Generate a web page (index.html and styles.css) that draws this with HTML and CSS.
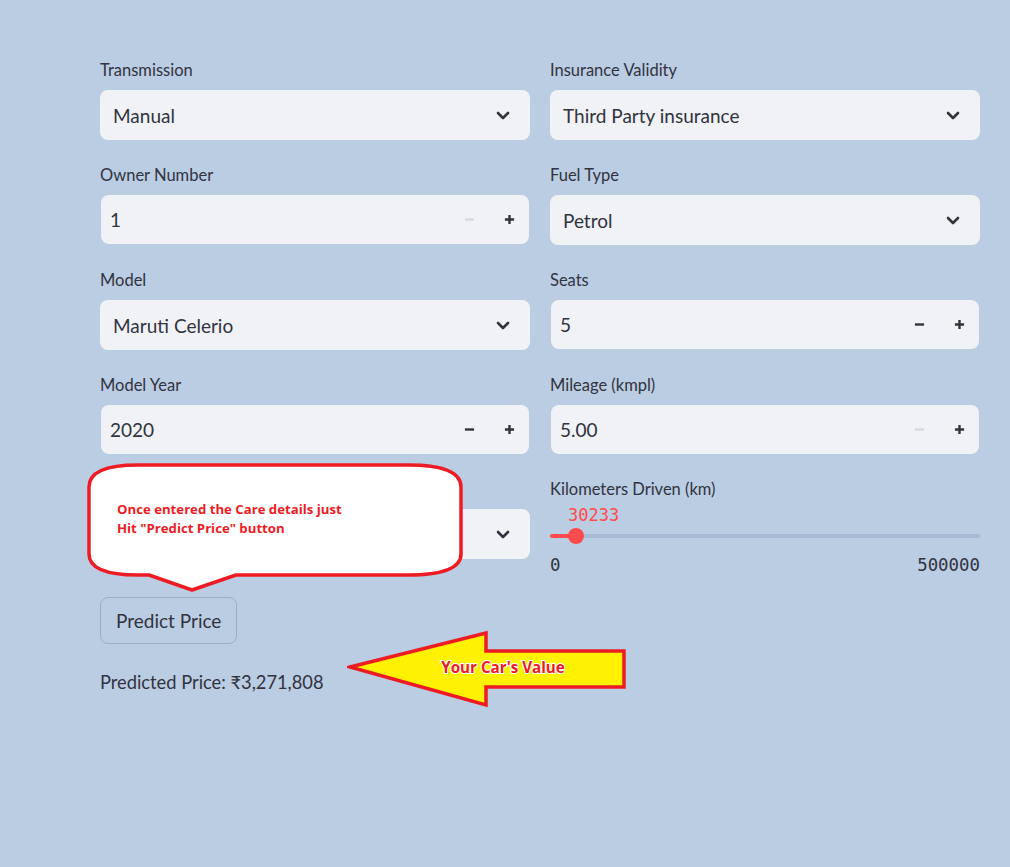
FILE: index.html
```html
<!DOCTYPE html>
<html>
<head>
<meta charset="utf-8">
<link rel="stylesheet" href="styles.css">
</head>
<body>
<main class="app">
  <div class="grid">
    <div class="field">
      <label class="lbl">Transmission</label>
      <div class="select"><span>Manual</span><svg class="chev" viewBox="0 0 14 9"><path d="M2 2l5 5 5-5"/></svg></div>
    </div>
    <div class="field">
      <label class="lbl">Insurance Validity</label>
      <div class="select"><span>Third Party insurance</span><svg class="chev" viewBox="0 0 14 9"><path d="M2 2l5 5 5-5"/></svg></div>
    </div>

    <div class="field">
      <label class="lbl">Owner Number</label>
      <div class="num"><span class="val">1</span><span class="btn dis"><svg viewBox="0 0 12 12"><path d="M1 6h10"/></svg></span><span class="btn"><svg viewBox="0 0 12 12"><path d="M1 6h10M6 1v10"/></svg></span></div>
    </div>
    <div class="field">
      <label class="lbl">Fuel Type</label>
      <div class="select"><span>Petrol</span><svg class="chev" viewBox="0 0 14 9"><path d="M2 2l5 5 5-5"/></svg></div>
    </div>

    <div class="field">
      <label class="lbl">Model</label>
      <div class="select"><span>Maruti Celerio</span><svg class="chev" viewBox="0 0 14 9"><path d="M2 2l5 5 5-5"/></svg></div>
    </div>
    <div class="field">
      <label class="lbl">Seats</label>
      <div class="num"><span class="val">5</span><span class="btn"><svg viewBox="0 0 12 12"><path d="M1 6h10"/></svg></span><span class="btn"><svg viewBox="0 0 12 12"><path d="M1 6h10M6 1v10"/></svg></span></div>
    </div>

    <div class="field">
      <label class="lbl">Model Year</label>
      <div class="num"><span class="val">2020</span><span class="btn"><svg viewBox="0 0 12 12"><path d="M1 6h10"/></svg></span><span class="btn"><svg viewBox="0 0 12 12"><path d="M1 6h10M6 1v10"/></svg></span></div>
    </div>
    <div class="field">
      <label class="lbl">Mileage (kmpl)</label>
      <div class="num"><span class="val">5.00</span><span class="btn dis"><svg viewBox="0 0 12 12"><path d="M1 6h10"/></svg></span><span class="btn"><svg viewBox="0 0 12 12"><path d="M1 6h10M6 1v10"/></svg></span></div>
    </div>

    <div class="field">
      <div class="lbl"></div>
      <div class="select"><span></span><svg class="chev" viewBox="0 0 14 9"><path d="M2 2l5 5 5-5"/></svg></div>
    </div>
    <div class="field">
      <label class="lbl">Kilometers Driven (km)</label>
      <div class="slider">
        <div class="thumbval">30233</div>
        <div class="track"><div class="fill" style="width:6.05%"></div><div class="thumb" style="left:6.05%"></div></div>
        <div class="range"><span>0</span><span>500000</span></div>
      </div>
    </div>
  </div>

  <button class="predict">Predict Price</button>
  <p class="result">Predicted Price: ₹3,271,808</p>

  <svg class="callout" width="380" height="132" viewBox="0 0 380 132">
    <path d="M52 3 H322 Q375 3 375 25 V92 Q375 113 322 113 H150 L106 128 L63 113 H52 Q3 113 3 92 V25 Q3 3 52 3 Z" fill="#fff" stroke="#ED1C24" stroke-width="3.5" stroke-linejoin="round"/>
    <text x="31" y="52" class="ctext">Once entered the Care details just</text>
    <text x="31" y="71" class="ctext">Hit "Predict Price" button</text>
  </svg>

  <svg class="arrow" width="282" height="78" viewBox="0 0 282 78">
    <path d="M3 37 L139 3 V21 H277 V57 H139 V75 Z" fill="#FFF200" stroke="#ED1C24" stroke-width="3.5" stroke-linejoin="miter"/>
    <text x="156" y="43" class="atext">Your Car's Value</text>
  </svg>
</main>
</body>
</html>
```
FILE: styles.css
```css
html, body {
  margin: 0;
  padding: 0;
  background: #BBCDE2;
  height: 100%;
}
body {
  font-family: Lato, "Noto Sans", sans-serif;
  color: #31333F;
}
.app {
  position: relative;
  width: 880px;
  padding: 60px 0 0 100px;
}
.grid {
  display: grid;
  grid-template-columns: 430px 430px;
  column-gap: 20px;
  row-gap: 25px;
}
.lbl {
  display: block;
  font-size: 16.5px;
  line-height: 21px;
  height: 21px;
  margin-bottom: 9px;
}
.select, .num {
  height: 50px;
  box-sizing: border-box;
  background: #F0F2F6;
  border-radius: 8px;
  display: flex;
  align-items: center;
  font-size: 19px;
}
.select {
  padding: 0 20px 0 13px;
}
.select span { flex: 1; }
.chev {
  width: 14px;
  height: 9px;
  fill: none;
  stroke: #31333F;
  stroke-width: 2.6;
  stroke-linecap: round;
  stroke-linejoin: round;
}
.num {
  margin: 0 1px;
  height: 49px;
  padding-left: 9px;
}
.num .val { flex: 1; }
.btn {
  width: 40px;
  height: 100%;
  display: flex;
  align-items: center;
  justify-content: center;
}
.btn svg {
  width: 11px;
  height: 11px;
  fill: none;
  stroke: #31333F;
  stroke-width: 2.6;
}
.btn.dis svg { stroke: #D5D8DF; }
.thumbval {
  font-family: "DejaVu Sans Mono", monospace;
  font-size: 17px;
  color: #FF4B4B;
  line-height: 20px;
  padding-left: 18px;
  margin-top: -4px;
}
.track {
  position: relative;
  margin-top: 9px;
  height: 4px;
  border-radius: 2px;
  background: #A7BBD6;
}
.fill {
  height: 100%;
  background: #FF4B4B;
  border-radius: 2px;
}
.thumb {
  position: absolute;
  top: 50%;
  width: 16px;
  height: 16px;
  border-radius: 50%;
  background: #FF4B4B;
  transform: translate(-50%, -50%);
}
.range {
  display: flex;
  justify-content: space-between;
  font-family: "DejaVu Sans Mono", monospace;
  font-size: 17.4px;
  color: #31333F;
  margin-top: 17px;
  line-height: 20px;
}
.predict {
  display: block;
  margin-top: 22px;
  height: 47px;
  padding: 0 15px;
  font-family: inherit;
  font-size: 19px;
  color: #31333F;
  background: transparent;
  border: 1px solid rgba(49, 51, 63, 0.2);
  border-radius: 8px;
}
.result {
  margin: 27px 0 0;
  font-size: 18.3px;
  line-height: 22px;
}
.callout {
  position: absolute;
  left: 86px;
  top: 462px;
}
.ctext {
  font-family: "Open Sans", sans-serif;
  font-weight: 700;
  font-size: 13.2px;
  fill: #ED1C24;
}
.arrow {
  position: absolute;
  left: 347px;
  top: 630px;
}
.atext {
  font-family: "Open Sans", sans-serif;
  font-weight: 700;
  font-size: 15.2px;
  fill: #ED1C24;
  stroke: #fff;
  stroke-width: 2px;
  paint-order: stroke;
  text-anchor: middle;
}
```
